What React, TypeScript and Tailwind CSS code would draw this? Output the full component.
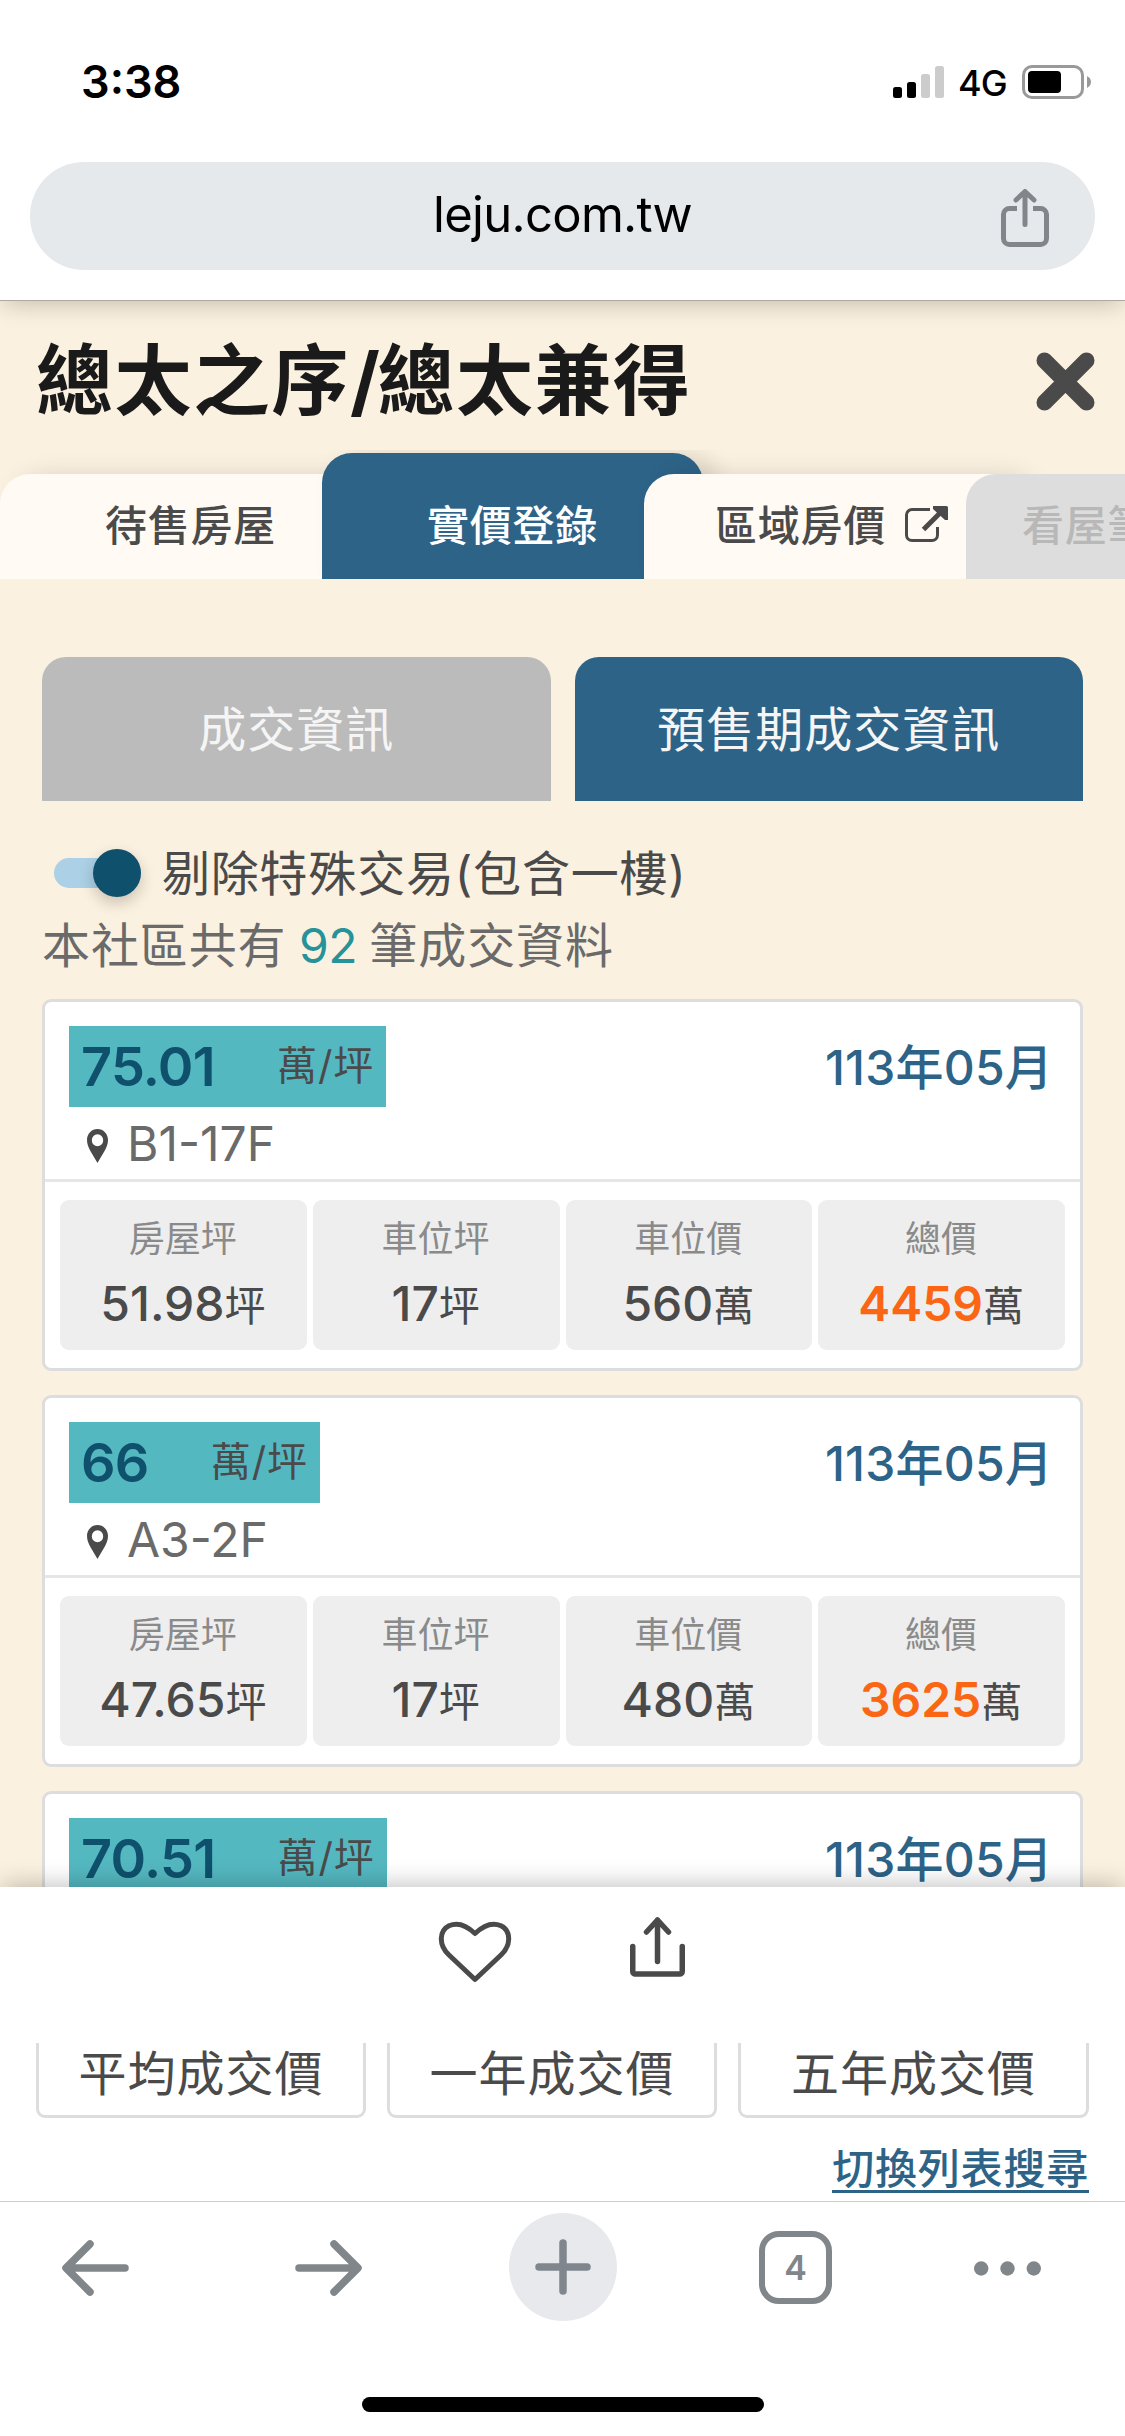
import React from 'react';

interface Deal {
  price: string;
  unit: string;
  date: string;
  floor?: string;
  cells: { label: string; value: string; suffix: string; hot?: boolean }[];
}

const deals: Deal[] = [
  {
    price: '75.01',
    unit: '萬/坪',
    date: '113年05月',
    floor: 'B1-17F',
    cells: [
      { label: '房屋坪', value: '51.98', suffix: '坪' },
      { label: '車位坪', value: '17', suffix: '坪' },
      { label: '車位價', value: '560', suffix: '萬' },
      { label: '總價', value: '4459', suffix: '萬', hot: true },
    ],
  },
  {
    price: '66',
    unit: '萬/坪',
    date: '113年05月',
    floor: 'A3-2F',
    cells: [
      { label: '房屋坪', value: '47.65', suffix: '坪' },
      { label: '車位坪', value: '17', suffix: '坪' },
      { label: '車位價', value: '480', suffix: '萬' },
      { label: '總價', value: '3625', suffix: '萬', hot: true },
    ],
  },
  {
    price: '70.51',
    unit: '萬/坪',
    date: '113年05月',
    cells: [],
  },
];

const StatusBar = () => (
  <div className="flex h-[162px] items-start justify-between pl-[81px] pr-[34px] pt-[54px] text-black">
    <span className="text-[45px] leading-[56px] font-semibold">3:38</span>
    <div className="flex h-[56px] items-center">
      <svg width="51" height="32" viewBox="0 0 51 32">
        <rect x="0" y="21" width="9" height="11" rx="2.5" />
        <rect x="14" y="16" width="9" height="16" rx="2.5" />
        <rect x="28" y="8" width="9" height="24" rx="2.5" fill="#ccc" />
        <rect x="42" y="0" width="9" height="32" rx="2.5" fill="#ccc" />
      </svg>
      <span className="ml-[14px] w-[49px] pt-[2px] text-[36px] leading-[56px] font-medium tracking-[-1px]">4G</span>
      <svg className="ml-[15px]" width="69" height="34" viewBox="0 0 69 34">
        <rect x="1.5" y="1.5" width="59" height="31" rx="8.5" fill="none" stroke="#999" strokeWidth="3" />
        <rect x="6" y="6" width="33" height="22" rx="4" />
        <path d="M65 11c2.600 1.400 4 3.400 4 6s-1.400 4.600-4 6z" fill="#999" />
      </svg>
    </div>
  </div>
);

const AddressBar = () => (
  <div className="mx-[30px] flex h-[108px] items-center rounded-full bg-[#e5e9ec]">
    <div className="w-[124px]"></div>
    <span className="flex-1 pb-[2px] text-center text-[49px] leading-[60px] tracking-[-0.7px] text-black">leju.com.tw</span>
    <div className="w-[124px] pl-[30px] pt-[3px]">
      <svg width="48" height="58" viewBox="0 0 48 58" fill="none" stroke="#80868a" strokeWidth="5">
        <path d="M16 19.500H8.500a6 6 0 0 0-6 6v24a6 6 0 0 0 6 6h31a6 6 0 0 0 6-6v-24a6 6 0 0 0-6-6H32" />
        <path d="M24 35.500V3M15 11l9-8.500 9 8.500" strokeLinecap="round" strokeLinejoin="round" />
      </svg>
    </div>
  </div>
);

const Tabs = () => (
  <div className="flex h-[129px] shrink-0 items-end overflow-hidden text-[42px] leading-[56px] font-medium tracking-[0.8px] text-[#4a4a4a]">
    <div className="flex h-[105px] w-[381px] shrink-0 items-center justify-center rounded-t-[30px] bg-[#fffaf3] pb-[2px] shadow-[14px_0_26px_-3px_rgba(0,0,0,0.14)]">
      待售房屋
    </div>
    <div className="-ml-[59px] flex h-[126px] w-[381px] shrink-0 items-center justify-center rounded-t-[30px] bg-[#2d6387] pt-[19px] text-white shadow-[14px_0_26px_-3px_rgba(0,0,0,0.14)]">
      實價登錄
    </div>
    <div className="-ml-[59px] flex h-[105px] w-[381px] shrink-0 items-center justify-center rounded-t-[30px] bg-[#fffaf3] pb-[2px] pr-[6px] shadow-[14px_0_26px_-3px_rgba(0,0,0,0.14)]">
      區域房價
      <svg className="mb-[5px] ml-[19px]" width="43" height="37" viewBox="0 0 43 37">
        <path d="M25 4.500H7a5.500 5.500 0 0 0-5.500 5.500v20A5.500 5.500 0 0 0 7 35.500h20a5.500 5.500 0 0 0 5.500-5.500V22" fill="none" stroke="#4a4a4a" strokeWidth="3" />
        <path d="M18.500 24.500L37 6" stroke="#4a4a4a" strokeWidth="5" />
        <path d="M28 1h13.500a1.500 1.500 0 0 1 1.500 1.500V15l-3 0L28 4z" fill="#4a4a4a" />
      </svg>
    </div>
    <div className="-ml-[59px] flex h-[105px] w-[381px] shrink-0 items-center rounded-t-[30px] bg-[#ddd] pb-[2px] pl-[56px] text-[#b8b8b8]">
      看屋筆記
    </div>
  </div>
);

const DealCard = ({ deal }: { deal: Deal }) => (
  <div className="h-[372px] shrink-0 rounded-[9px] border-[3px] border-[#ddd] bg-white">
    <div className="h-[180px] border-b-[3px] border-[#e5e6e8] pl-[24px] pr-[27px] pt-[24px]">
      <div className="flex items-start justify-between">
        <div className="flex h-[81px] items-center bg-[#54b8c1] pl-[12px] pr-[12px]">
          <span className="pt-[1px] text-[54px] leading-[80px] font-semibold tracking-[-0.7px] text-[#0f506c]">{deal.price}</span>
          <span className="ml-[62px] pb-[1px] text-[40px] leading-[60px] tracking-[1px] text-[#4a4a4a]">{deal.unit}</span>
        </div>
        <span className="pt-[4px] text-[48px] leading-[76px] font-medium tracking-[0.2px] text-[#2d6387]">{deal.date}</span>
      </div>
      {deal.floor && (
        <div className="flex h-[72px] items-center pl-[18px]">
          <svg className="mt-[6px]" width="21" height="34" viewBox="0 0 21 34">
            <path fillRule="evenodd" fill="#4a4a4a" d="M10.500 0C4.700 0 0 4.900 0 11c0 8 6 14.500 10.500 23C15 25.500 21 19 21 11 21 4.900 16.300 0 10.500 0zm0 5.200a5.700 6 0 1 1 0 12 5.700 6 0 1 1 0-12z" />
          </svg>
          <span className="ml-[19px] pt-[2px] text-[48px] leading-[60px] text-[#6a6a6a]">{deal.floor}</span>
        </div>
      )}
    </div>
    <div className="grid grid-cols-4 gap-[6px] px-[15px] pt-[18px]">
      {deal.cells.map((cell) => (
        <div key={cell.label} className="flex h-[150px] flex-col items-center rounded-[9px] bg-[#eee] pr-px pt-[14px] text-[#4a4a4a]">
          <span className="text-[36px] leading-[50px] text-[#8a8a8a]">{cell.label}</span>
          <div className="flex items-baseline pt-[8px]">
            <span className={cell.hot ? 'text-[48px] leading-[64px] font-semibold text-[#fa6614]' : 'text-[48px] leading-[64px] font-medium'}>
              {cell.value}
            </span>
            <span className="text-[41px] leading-[64px]">{cell.suffix}</span>
          </div>
        </div>
      ))}
    </div>
  </div>
);

const BottomSheet = () => (
  <div className="relative z-10 h-[315px] shrink-0 border-b border-[#ccc] bg-white shadow-[0_-4px_24px_-3px_rgba(0,0,0,0.27)]">
    <div className="flex h-[156px] items-start bg-white pl-[438px] pt-[30px]">
      <svg className="mt-[4px]" width="74" height="62" viewBox="0 0 74 62" fill="none" stroke="#4a4a4a" strokeWidth="5" strokeLinejoin="round">
        <path d="M37 58.500L11 34C0 23.500 1.500 9.500 11 4.800 20 .8 28 4 37 12.500 46 4 54 .8 63 4.800 72.500 9.500 74 23.500 63 34z" />
      </svg>
      <svg className="ml-[118px]" width="55" height="60" viewBox="0 0 55 60" fill="none" stroke="#4a4a4a" strokeWidth="5.500" strokeLinecap="round" strokeLinejoin="round">
        <path d="M2.750 29.500v25a2.500 2.500 0 0 0 2.500 2.500h44.500a2.500 2.500 0 0 0 2.500-2.500v-25" />
        <path d="M27.500 44.500V3M16.500 15l11-12 11 12" />
      </svg>
    </div>
    <div className="flex gap-[21px] px-[36px] text-[48px] leading-[62px] tracking-[1px] text-[#4a4a4a]">
      <div className="h-[75px] w-[330px] rounded-b-[9px] border-[3px] border-t-0 border-[#ddd] text-center">平均成交價</div>
      <div className="h-[75px] w-[330px] rounded-b-[9px] border-[3px] border-t-0 border-[#ddd] text-center">一年成交價</div>
      <div className="h-[75px] flex-1 rounded-b-[9px] border-[3px] border-t-0 border-[#ddd] text-center">五年成交價</div>
    </div>
    <div className="flex justify-end pr-[36px] pt-[20px]">
      <a className="h-[55px] border-b-[3px] border-[#2d6387] text-[42px] leading-[62px] font-medium tracking-[0.8px] text-[#2d6387]">切換列表搜尋</a>
    </div>
  </div>
);

const BrowserNav = () => (
  <div className="relative z-20 flex h-[234px] shrink-0 flex-col items-center bg-white pt-[11px]">
    <div className="flex h-[108px] w-full items-center">
      <svg className="ml-[62px] mt-px" width="67" height="56" viewBox="0 0 67 56" fill="none" stroke="#80868a" strokeWidth="7.500" strokeLinecap="round" strokeLinejoin="round">
        <path d="M63 28H5M28 4L4 28l24 24" />
      </svg>
      <svg className="ml-[166px] mt-px" width="67" height="56" viewBox="0 0 67 56" fill="none" stroke="#80868a" strokeWidth="7.500" strokeLinecap="round" strokeLinejoin="round">
        <path d="M4 28h58M39 4l24 24-24 24" />
      </svg>
      <div className="ml-[147px] flex size-[108px] items-center justify-center rounded-full bg-[#e8e9ed]">
        <svg width="56" height="56" viewBox="0 0 56 56" stroke="#80868e" strokeWidth="7.500" strokeLinecap="round">
          <path d="M4 28h48M28 4v48" />
        </svg>
      </div>
      <div className="ml-[142px] flex size-[73px] items-center justify-center rounded-[20px] border-[6.500px] border-[#80868a] pt-[2px] text-[34px] leading-[40px] font-semibold text-[#80868a]">
        4
      </div>
      <svg className="ml-[142px] mt-[2px]" width="67" height="15" viewBox="0 0 67 15" fill="#80868a">
        <circle cx="7.200" cy="7.500" r="7.200" />
        <circle cx="33.500" cy="7.500" r="7.200" />
        <circle cx="59.800" cy="7.500" r="7.200" />
      </svg>
    </div>
    <div className="mt-[76px] h-[15px] w-[402px] rounded-full bg-black"></div>
  </div>
);

const App = () => {
  return (
    <div className="flex h-[2436px] w-[1125px] flex-col overflow-hidden bg-[#fbf1e0] font-['Inter','Noto_Sans_CJK_TC',sans-serif]">
      <header className="relative z-10 h-[301px] shrink-0 border-b border-[#b0a99d] bg-white shadow-[0_4px_24px_-3px_rgba(0,0,0,0.25)]">
        <StatusBar />
        <AddressBar />
      </header>

      <main className="flex h-[1586px] shrink-0 flex-col overflow-hidden">
        <div className="flex h-[149px] shrink-0 items-start justify-between pl-[36px] pr-[30px] pt-[30px]">
          <h1 className="text-[77px] leading-[100px] font-bold tracking-[1.500px] text-[#1a1a1a]">
            總太之序<span className="tracking-[-2.500px]">/</span>總太兼得
          </h1>
          <svg className="mt-[21px]" width="59" height="59" viewBox="0 0 59 59" stroke="#4a4a4a" strokeWidth="16" strokeLinecap="round">
            <path d="M8.500 8.500l42 42M50.500 8.500l-42 42" />
          </svg>
        </div>
        <Tabs />

        <div className="mt-[78px] flex shrink-0 gap-[24px] px-[42px] text-[48px] leading-[60px] tracking-[1px] text-[#f5f5f5]">
          <div className="flex h-[144px] flex-1 items-center justify-center rounded-t-[24px] bg-[#bbb] pt-[2px]">成交資訊</div>
          <div className="flex h-[144px] flex-1 items-center justify-center rounded-t-[24px] bg-[#2d6387] pt-[2px]">預售期成交資訊</div>
        </div>

        <div className="mt-[36px] flex h-[72px] shrink-0 items-center pl-[54px]">
          <div className="flex h-[30px] w-[87px] items-center justify-end rounded-full bg-[#acd0e6]">
            <div className="size-[48px] shrink-0 rounded-full bg-[#0f506c] shadow-[0_6px_15px_rgba(0,0,0,0.2)]"></div>
          </div>
          <span className="ml-[21px] pt-[2px] text-[48px] leading-[60px] tracking-[0.8px] text-[#4a4a4a]">剔除特殊交易(包含一樓)</span>
        </div>
        <p className="h-[90px] shrink-0 pl-[42px] text-[48px] leading-[74px] tracking-[0.9px] [word-spacing:-2px] text-[#6a6a6a]">
          本社區共有 <span className="tracking-[-0.5px] text-[#26929a]">92</span> 筆成交資料
        </p>

        <div className="flex flex-col gap-[24px] px-[42px]">
          {deals.map((deal) => (
            <DealCard key={deal.price} deal={deal} />
          ))}
        </div>
      </main>

      <BottomSheet />
      <BrowserNav />
    </div>
  );
};

export default App;
